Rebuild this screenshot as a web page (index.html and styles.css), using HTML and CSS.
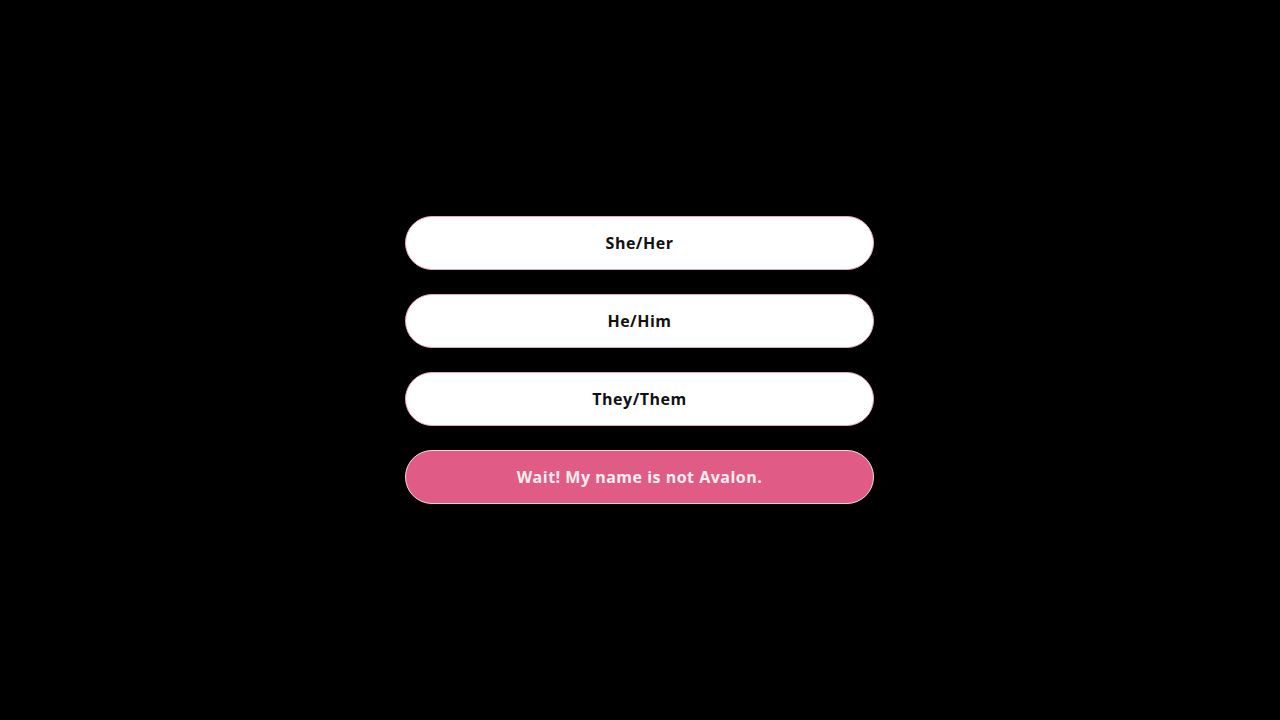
FILE: index.html
```html
<!DOCTYPE html>
<html lang="en">
<head>
<meta charset="utf-8">
<title>Pronouns</title>
<link rel="stylesheet" href="styles.css">
</head>
<body>
<main class="screen">
  <div class="choices">
    <button class="choice">She/Her</button>
    <button class="choice">He/Him</button>
    <button class="choice">They/Them</button>
    <button class="choice choice-alt">Wait! My name is not Avalon.</button>
  </div>
</main>
</body>
</html>
```
FILE: styles.css
```css
html, body {
  margin: 0;
  padding: 0;
  background: #000;
}
.screen {
  width: 1280px;
  height: 720px;
  display: flex;
  align-items: center;
  justify-content: center;
}
.choices {
  display: flex;
  flex-direction: column;
  gap: 24px;
  margin-right: 1px;
}
.choice {
  width: 469px;
  height: 54px;
  border-radius: 27px;
  border: 1px solid #e8a5bb;
  background: #fff;
  color: #111;
  font-family: "Open Sans", "Liberation Sans", sans-serif;
  font-weight: 700;
  font-size: 16px;
  letter-spacing: 0.5px;
  padding: 0;
  cursor: pointer;
}
.choice-alt {
  background: #e05c86;
  border: 1.5px solid #f6d7e0;
  color: #fbeef2;
}
```
